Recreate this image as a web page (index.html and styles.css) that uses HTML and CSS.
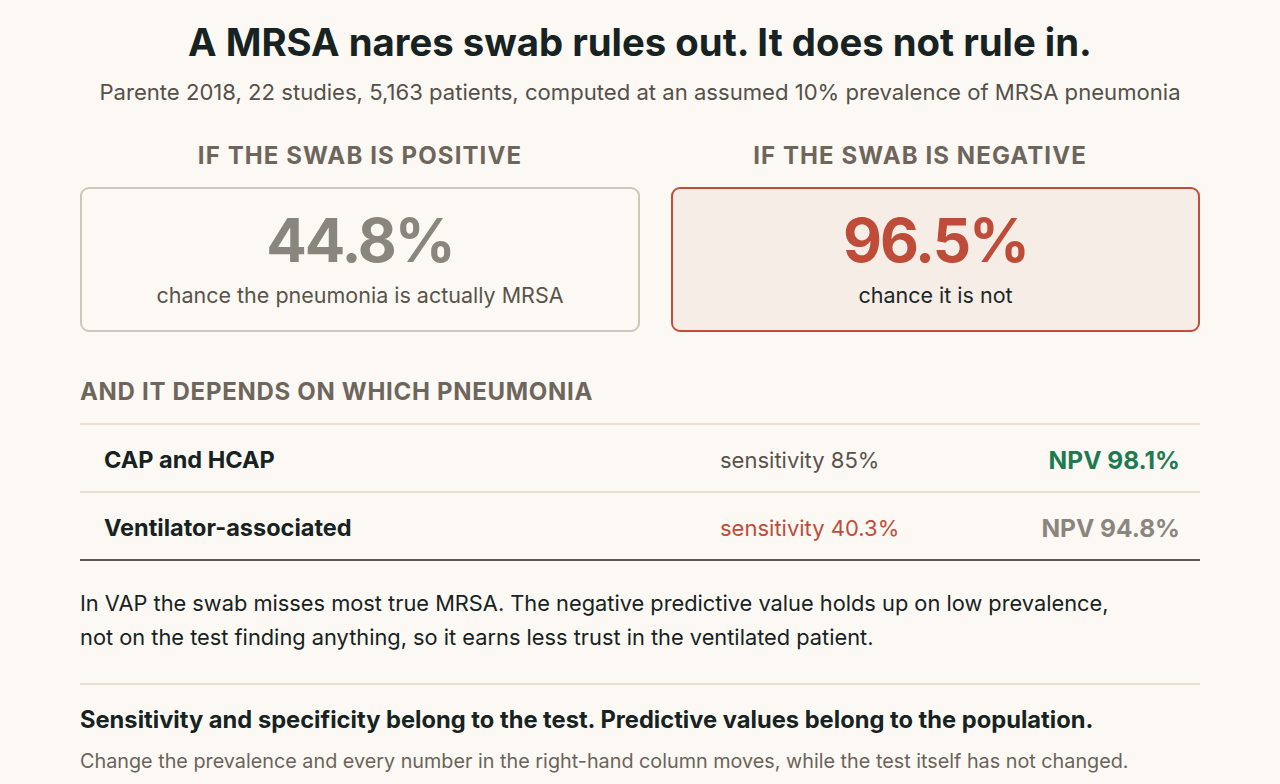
FILE: index.html
```html
<!DOCTYPE html>
<html lang="en">
<head>
<meta charset="utf-8">
<title>MRSA nares swab</title>
<link rel="stylesheet" href="styles.css">
</head>
<body>
<main class="page">
  <header class="head">
    <h1 class="title">A MRSA nares swab rules out. It does not rule in.</h1>
    <p class="sub">Parente 2018, 22 studies, 5,163 patients, computed at an assumed 10% prevalence of MRSA pneumonia</p>
  </header>

  <section class="compare">
    <div class="col">
      <h2 class="colhead">If the swab is positive</h2>
      <div class="card card-pos">
        <div class="big big-pos">44.8%</div>
        <div class="cap cap-pos">chance the pneumonia is actually MRSA</div>
      </div>
    </div>
    <div class="col">
      <h2 class="colhead">If the swab is negative</h2>
      <div class="card card-neg">
        <div class="big big-neg">96.5%</div>
        <div class="cap cap-neg">chance it is not</div>
      </div>
    </div>
  </section>

  <h2 class="section">And it depends on which pneumonia</h2>
  <div class="table">
    <div class="row">
      <div class="name">CAP and HCAP</div>
      <div class="sens">sensitivity 85%</div>
      <div class="npv npv-good">NPV 98.1%</div>
    </div>
    <div class="row">
      <div class="name">Ventilator-associated</div>
      <div class="sens sens-bad">sensitivity 40.3%</div>
      <div class="npv npv-muted">NPV 94.8%</div>
    </div>
  </div>

  <p class="note">In VAP the swab misses most true MRSA. The negative predictive value holds up on low prevalence,<br>not on the test finding anything, so it earns less trust in the ventilated patient.</p>

  <div class="rule"></div>

  <h3 class="lesson">Sensitivity and specificity belong to the test. Predictive values belong to the population.</h3>
  <p class="foot">Change the prevalence and every number in the right-hand column moves, while the test itself has not changed.</p>
</main>
</body>
</html>
```

FILE: styles.css
```css
* { box-sizing: border-box; }
html, body { margin: 0; padding: 0; }
body {
  background: #fcf9f4;
  font-family: Inter, "Noto Sans", sans-serif;
  color: #1b2626;
}
.page {
  width: 1120px;
  margin: 0 auto;
  padding-top: 18px;
}
.head { text-align: center; }
.title {
  margin: 0;
  font-size: 38.3px;
  line-height: 48px;
  font-weight: 700;
  color: #172222;
}
.sub {
  margin: 11px 0 0;
  font-size: 22.1px;
  line-height: 30px;
  color: #555049;
  white-space: nowrap;
}
.compare {
  display: grid;
  grid-template-columns: 1fr 1fr;
  margin-top: 34px;
}
.col { display: flex; flex-direction: column; }
.colhead {
  margin: 0 0 16px;
  text-align: center;
  font-size: 24px;
  line-height: 30px;
  font-weight: 700;
  letter-spacing: 1.1px;
  text-transform: uppercase;
  color: #6e665c;
}
.col:last-child .card { margin-left: 31px; }
.card {
  height: 145px;
  border-radius: 9px;
  display: flex;
  flex-direction: column;
  align-items: center;
  padding-top: 16px;
}
.card-pos { border: 2px solid #cdc6ba; background: #fcf9f4; }
.card-neg { border: 2.5px solid #c14d3b; background: #f5ede6; }
.big {
  font-size: 60px;
  line-height: 70px;
  font-weight: 700;
  letter-spacing: -2px;
}
.big-pos { color: #8a867e; }
.big-neg { color: #bf4c39; }
.cap {
  margin-top: 6px;
  font-size: 21.5px;
  line-height: 28px;
}
.cap-pos { color: #5a534b; }
.cap-neg { color: #1b2626; }

.section {
  margin: 45px 0 16px;
  font-size: 24px;
  line-height: 30px;
  font-weight: 700;
  letter-spacing: 0.7px;
  text-transform: uppercase;
  color: #6e665c;
}
.table {
  border-top: 2px solid #e7dfd1;
  border-bottom: 2px solid #5c5752;
}
.row {
  display: grid;
  grid-template-columns: 616px 1fr auto;
  align-items: center;
  height: 66px;
  padding: 3px 20px 0 24px;
}
.row + .row { border-top: 2px solid #e7dfd1; height: 68px; }
.name { font-size: 23.5px; font-weight: 700; color: #172222; }
.sens { font-size: 22px; color: #5a534b; }
.sens-bad { color: #bf4c39; }
.npv { font-size: 24.5px; font-weight: 700; text-align: right; }
.npv-good { color: #1f7a52; }
.npv-muted { color: #8a867e; }

.note {
  margin: 25px 0 0;
  font-size: 21.8px;
  line-height: 34px;
  color: #172222;
  white-space: nowrap;
}
.rule {
  margin-top: 29px;
  height: 2px;
  background: #e7dfd1;
}
.lesson {
  margin: 20px 0 0;
  font-size: 23.7px;
  line-height: 30px;
  font-weight: 700;
  color: #172222;
  white-space: nowrap;
}
.foot {
  margin: 12px 0 0;
  font-size: 19.8px;
  line-height: 28px;
  color: #6b635a;
  white-space: nowrap;
}
```
